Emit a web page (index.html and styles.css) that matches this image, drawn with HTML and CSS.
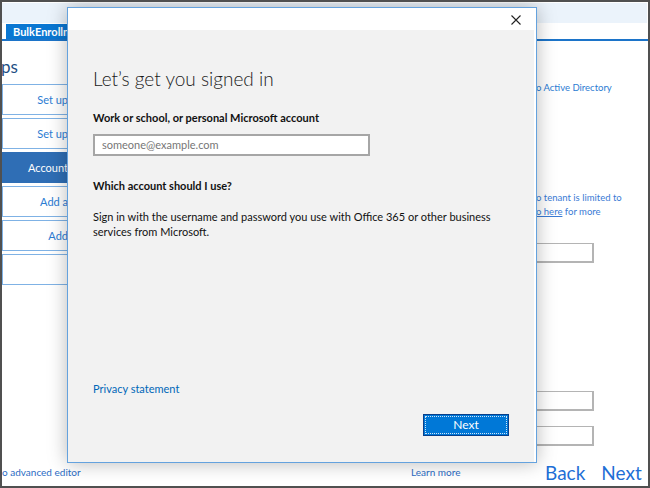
FILE: index.html
```html
<!DOCTYPE html>
<html>
<head>
<meta charset="utf-8">
<link rel="stylesheet" href="styles.css">
</head>
<body>
<div class="window">
  <div class="topstrip"></div>
  <div class="tabbar"><div class="tab">BulkEnrollment</div></div>
  <div class="main">
    <aside class="sidebar">
      <h2 class="steps">ps</h2>
      <div class="step">Set up</div>
      <div class="step">Set up</div>
      <div class="step active">Account</div>
      <div class="step">Add a</div>
      <div class="step">Add</div>
      <div class="step"></div>
    </aside>
    <section class="middle"></section>
    <section class="right">
      <p class="r-ad">o Active Directory</p>
      <p class="r-note">o tenant is limited to<br><a class="r-link">o here</a> for more</p>
      <div class="r-input r-input1"></div>
      <div class="r-input r-input2"></div>
      <div class="r-input r-input3"></div>
    </section>
  </div>
  <footer class="footer">
    <a class="f-adv">o advanced editor</a>
    <a class="f-learn">Learn more</a>
    <div class="f-nav"><a>Back</a><a>Next</a></div>
  </footer>

  <div class="dialog">
    <div class="d-title">
      <svg class="close" width="10" height="10" viewBox="0 0 10 10"><path d="M0.5 0.5 L9.5 9.5 M9.5 0.5 L0.5 9.5" stroke="#222" stroke-width="1.1" fill="none"/></svg>
    </div>
    <div class="d-body">
      <h1 class="d-head">Let’s get you signed in</h1>
      <label class="d-label">Work or school, or personal Microsoft account</label>
      <div class="d-input">someone@example.com</div>
      <h3 class="d-q">Which account should I use?</h3>
      <p class="d-text">Sign in with the username and password you use with Office 365 or other business services from Microsoft.</p>
      <div class="d-spacer"></div>
      <a class="d-privacy">Privacy statement</a>
      <div class="d-actions"><button class="d-next"><span>Next</span></button></div>
    </div>
  </div>
</div>
</body>
</html>
```

FILE: styles.css
```css
* { box-sizing: border-box; }
html, body { margin: 0; padding: 0; }
body {
  width: 650px; height: 488px; overflow: hidden; background: #fff;
  font-family: "Segoe UI", Lato, "Liberation Sans", sans-serif;
}
.window {
  position: relative; width: 650px; height: 488px;
  border: 2px solid #505050;
  display: flex; flex-direction: column; background: #fff; overflow: hidden;
}
.topstrip { height: 20px; margin-top: 1px; margin-right: 1px; background: #ebf3fb; flex: none; }
.tabbar {
  height: 18px; flex: none; display: flex; align-items: flex-end; padding-left: 4px;
  border-bottom: 2px solid #1c74c9;
}
.tab {
  background: #0a77d2; color: #fff; font-size: 11px; font-weight: 700;
  height: 15px; line-height: 15px; padding: 0 10px 0 7px; white-space: nowrap;
}
.main { flex: 1; display: grid; grid-template-columns: 66px 1fr 112px; min-height: 0; }
.sidebar { display: flex; flex-direction: column; gap: 3px; }
.steps { margin: 17px 0 5px -1px; font-size: 17px; font-weight: 400; color: #1f4f85; line-height: 18px; }
.step {
  height: 31px; border: 1px solid #7fb2e5; border-right: none; color: #2b7cd3; font-size: 11px;
  display: flex; align-items: center; justify-content: flex-end; white-space: nowrap; padding-right: 0;
}
.step.active { background: #2f6eb5; color: #fff; border-color: #2f6eb5; }
.right { position: relative; font-size: 9.5px; color: #2b7cd3; }
.right p { margin: 0; }
.r-ad { margin-top: 41px !important; }
.r-note { margin-top: 98px !important; line-height: 14px; color: #3a7bd5; }
.r-link { text-decoration: underline; }
.r-input { height: 20px; width: 76px; margin-left: -18px; border: 1px solid #b4b4b4; border-right-width: 2px; border-bottom-width: 2px; }
.r-input1 { margin-top: 24px; }
.r-input2 { margin-top: 128px; }
.r-input3 { margin-top: 15px; }
.footer {
  height: 25px; flex: none; display: flex; align-items: center; padding-bottom: 3px;
  font-size: 10px; color: #2b6cc4;
}
.f-adv { width: 409px; }
.f-learn { width: 134px; }
.f-nav { display: flex; gap: 16px; font-size: 19px; color: #1f6fd6; }

.dialog {
  position: absolute; left: 65px; top: 5px; width: 470px; height: 456px;
  border: 1px solid #64a2de; background: #fff;
  box-shadow: 0 0 18px rgba(0,0,0,0.28);
  display: flex; flex-direction: column; padding-right: 2px;
}
.d-title { height: 22px; flex: none; display: flex; justify-content: flex-end; align-items: center; padding-right: 13px; padding-top: 1px; }
.d-body {
  flex: 1; background: #f2f2f2; display: flex; flex-direction: column; align-items: flex-start;
  padding: 35px 25px 26px 25px; color: #111;
}
.d-head { margin: 0; font-size: 19px; font-weight: 300; line-height: 28px; color: #1a1a1a; }
.d-label { margin-top: 17px; font-size: 11px; font-weight: 700; line-height: 16px; }
.d-input {
  margin-top: 8px; width: 277px; height: 22px; background: #fff; border: 2px solid #a6a6a6;
  font-size: 11px; color: #767676; padding-left: 7px; line-height: 18px;
}
.d-q { margin: 22px 0 0; font-size: 11px; font-weight: 700; line-height: 16px; }
.d-text { margin: 15px 0 0; font-size: 11px; line-height: 15px; width: 420px; }
.d-spacer { flex: 1; }
.d-privacy { font-size: 11px; color: #0067b8; line-height: 16px; }
.d-actions { align-self: stretch; display: flex; justify-content: flex-end; margin-top: 17px; }
.d-next {
  width: 86px; height: 22px; background: #0078d7; border: 1px solid #0a3f8a; padding: 1px;
  font-family: inherit; font-size: 12px; color: #fff;
}
.d-next span { display: block; height: 100%; border: 1px dotted #cfe3f8; line-height: 16px; }
```
